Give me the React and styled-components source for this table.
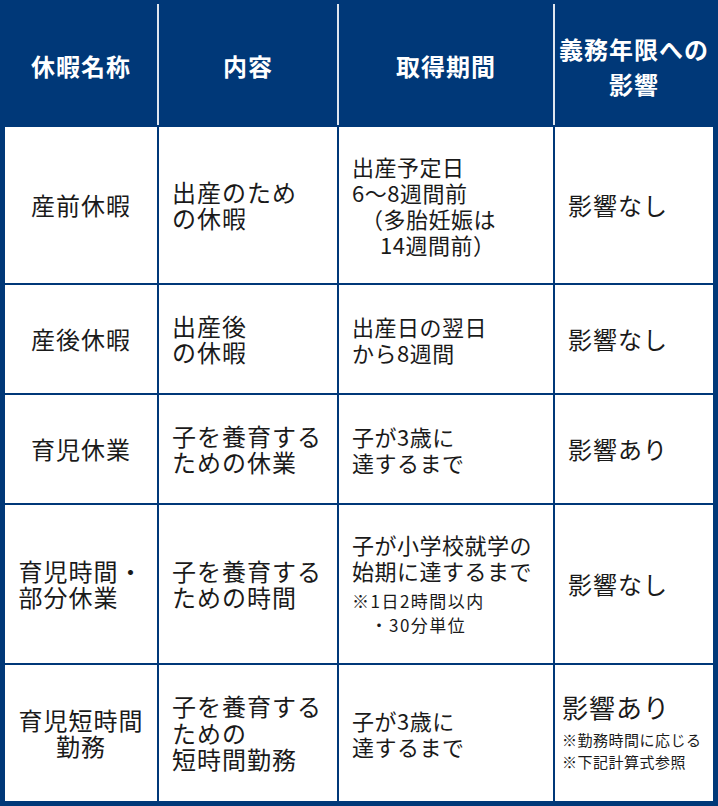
import React from 'react';
import styled, { createGlobalStyle } from 'styled-components';

const NAVY = '#003878';
const HEADER_RULE = '#dfe5ee';
const COLUMNS = '152px 178px 214px 158px';

const GlobalStyle = createGlobalStyle`
    body {
        margin: 0;
        background: #fff;
        font-family: "Noto Sans CJK JP", "Noto Sans", sans-serif;
    }
`;

const Table = styled.div`
    width: 718px;
    height: 806px;
    box-sizing: border-box;
    padding: 4px 5px 5px;
    background: ${NAVY};
    display: grid;
    grid-template-columns: ${COLUMNS};
    grid-template-rows: 121px 156px 108px 108px 158px 136px;
    gap: 2px;
`;

const HeaderRow = styled.div`
    grid-column: 1 / -1;
    display: grid;
    grid-template-columns: ${COLUMNS};
    column-gap: 2px;
    background: ${HEADER_RULE};
`;

const HeaderCell = styled.div`
    background: ${NAVY};
    color: #fff;
    font-weight: 700;
    font-size: 24px;
    letter-spacing: 1px;
    line-height: 1.45;
    text-align: center;
    display: flex;
    align-items: center;
    justify-content: center;
    padding-top: 4px;
`;

const Cell = styled.div`
    background: #fff;
    color: #1a1a1a;
    display: flex;
    align-items: center;
    justify-content: ${props => (props.center ? 'center' : 'flex-start')};
    padding: 0 ${props => props.pad ?? 13}px;
`;

const Text = styled.div`
    font-size: ${props => props.size || 24}px;
    letter-spacing: ${props => props.spacing ?? 1}px;
    line-height: ${props => props.lh || '1.1'};
    text-align: ${props => props.align || 'left'};
`;

// the period column is set a little smaller than the others
const PeriodText = styled(Text).attrs({ size: 22, spacing: 0.5, lh: '26px' })``;

const Line = styled.span`
    display: block;
    white-space: nowrap;
    padding-left: ${props => props.indent || 0}px;
`;

const Note = styled.div`
    font-size: ${props => props.size || 17}px;
    letter-spacing: ${props => props.spacing ?? 1.5}px;
    line-height: ${props => props.lh || '24px'};
    margin-top: ${props => props.gap || 6}px;
    white-space: nowrap;
`;

const LeaveTable = () => <Table>
        <HeaderRow>
            <HeaderCell>休暇名称</HeaderCell>
            <HeaderCell>内容</HeaderCell>
            <HeaderCell>取得期間</HeaderCell>
            <HeaderCell>義務年限への<br />影響</HeaderCell>
        </HeaderRow>

        <Cell center><Text align="center">産前休暇</Text></Cell>
        <Cell><Text><Line>出産のため</Line><Line>の休暇</Line></Text></Cell>
        <Cell>
            <PeriodText>
                <Line>出産予定日</Line>
                <Line>6〜8週間前</Line>
                <Line indent={9}>（多胎妊娠は</Line>
                <Line indent={28}>14週間前）</Line>
            </PeriodText>
        </Cell>
        <Cell><Text>影響なし</Text></Cell>

        <Cell center><Text align="center">産後休暇</Text></Cell>
        <Cell><Text><Line>出産後</Line><Line>の休暇</Line></Text></Cell>
        <Cell><PeriodText><Line>出産日の翌日</Line><Line>から8週間</Line></PeriodText></Cell>
        <Cell><Text>影響なし</Text></Cell>

        <Cell center><Text align="center">育児休業</Text></Cell>
        <Cell><Text><Line>子を養育する</Line><Line>ための休業</Line></Text></Cell>
        <Cell><PeriodText><Line>子が3歳に</Line><Line>達するまで</Line></PeriodText></Cell>
        <Cell><Text>影響あり</Text></Cell>

        <Cell center><Text><Line>育児時間・</Line><Line>部分休業</Line></Text></Cell>
        <Cell><Text><Line>子を養育する</Line><Line>ための時間</Line></Text></Cell>
        <Cell>
            <div>
                <PeriodText><Line>子が小学校就学の</Line><Line>始期に達するまで</Line></PeriodText>
                <Note>
                    <Line>※1日2時間以内</Line>
                    <Line>　・30分単位</Line>
                </Note>
            </div>
        </Cell>
        <Cell><Text>影響なし</Text></Cell>

        <Cell center><Text align="center"><Line>育児短時間</Line><Line>勤務</Line></Text></Cell>
        <Cell><Text><Line>子を養育する</Line><Line>ための</Line><Line>短時間勤務</Line></Text></Cell>
        <Cell><PeriodText><Line>子が3歳に</Line><Line>達するまで</Line></PeriodText></Cell>
        <Cell pad={7}>
            <div>
                <Text size={26}>影響あり</Text>
                <Note size={15} spacing={0.5} lh="22px" gap={8}>
                    <Line>※勤務時間に応じる</Line>
                    <Line>※下記計算式参照</Line>
                </Note>
            </div>
        </Cell>
    </Table>

const App = () => <>
        <GlobalStyle />
        <LeaveTable />
    </>

export default App;
